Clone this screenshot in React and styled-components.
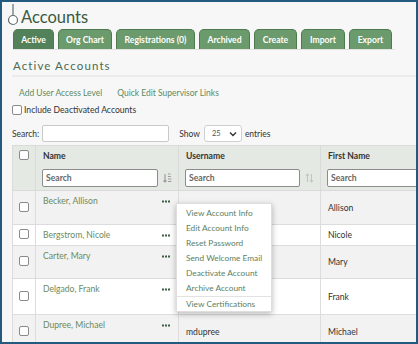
import React from "react"
import styled, { createGlobalStyle } from "styled-components"

const Global = createGlobalStyle`
  html, body { margin: 0; padding: 0; background: #ffffff; }
  * { box-sizing: border-box; }
`

const Frame = styled.div`
  width: 418px;
  height: 344px;
  border: 2px solid #245a7e;
  background: #f7f7f7;
  overflow: hidden;
  font-family: Lato, "Liberation Sans", sans-serif;
  color: #333;
`

const TitleRow = styled.div`
  display: flex;
  align-items: flex-end;
  height: 25px;
  padding-left: 5px;
`

const Title = styled.h1`
  margin: 0 0 0 2px;
  font-size: 16.5px;
  line-height: 19px;
  font-weight: 400;
  color: #3b5a40;
`

const Tabs = styled.div`
  display: flex;
  gap: 4px;
  margin: 2px 0 0 11px;
  width: 382px;
  border-bottom: 1px solid #e2e2e2;
`

const Tab = styled.div`
  width: ${p => p.$w}px;
  height: 20px;
  display: flex;
  align-items: center;
  justify-content: center;
  border: 1px solid #4d7a4f;
  border-bottom: none;
  border-radius: 5px 5px 0 0;
  background: ${p => (p.$active ? "#52815a" : "#6b9a6d")};
  color: #fff;
  font-size: 8.6px;
  font-weight: 700;
  white-space: nowrap;
`

const Panel = styled.div`
  padding: 0 0 0 10px;
`

const PanelTitle = styled.h2`
  margin: 0;
  padding: 9px 0 3px 1px;
  font-size: 11.5px;
  font-weight: 400;
  letter-spacing: 1.1px;
  color: #4b6a50;
  border-bottom: 2px solid #ebebeb;
`

const Links = styled.div`
  display: flex;
  gap: 15px;
  padding: 11px 0 0 7px;
  height: 26px;
`

const Link = styled.span`
  font-size: 8.5px;
  color: #5d8a5f;
`

const CheckRow = styled.label`
  display: flex;
  align-items: center;
  gap: 2px;
  height: 14px;
  font-size: 8.6px;
  color: #333;
`

const Box = styled.span`
  display: inline-block;
  width: 10px;
  height: 10px;
  border: 1px solid #8a8a8a;
  border-radius: 2px;
  background: #fff;
`

const Controls = styled.div`
  display: flex;
  align-items: center;
  height: 17px;
  margin-top: 8px;
  font-size: 8.5px;
  color: #333;
`

const Input = styled.div`
  width: ${p => p.$w}px;
  height: 17px;
  background: #fff;
  border: 1px solid #c9c9c9;
  border-radius: 2px;
  margin-left: ${p => p.$ml || 0}px;
`

const Select = styled.div`
  display: flex;
  align-items: center;
  justify-content: space-between;
  width: 38px;
  height: 17px;
  margin: 0 3px 0 4px;
  padding: 0 4px 0 7px;
  background: #fff;
  border: 1px solid #cfcfcf;
  border-radius: 3px;
  font-size: 7.5px;
  color: #555;
`

const Wrap = styled.div`
  position: relative;
  margin: 3px 0 0 0;
`

const Table = styled.table`
  border-collapse: collapse;
  table-layout: fixed;
  width: 440px;
  font-size: 8.6px;
`

const Th = styled.th`
  width: ${p => p.$w}px;
  height: 20px;
  padding: 0 7px;
  text-align: left;
  font-weight: 700;
  color: #333;
  background: #e4e9e4;
  border: 1px solid #dadada;
  border-bottom: none;
`

const FilterCell = styled.td`
  height: 25px;
  padding: 0 6px;
  background: #e4e9e4;
  border: 1px solid #dadada;
  border-top: none;
`

const FilterBox = styled.div`
  display: flex;
  align-items: center;
  gap: 5px;
`

const FilterInput = styled.div`
  width: ${p => p.$w}px;
  height: 18px;
  display: flex;
  align-items: center;
  padding-left: 3px;
  background: #fff;
  border: 1px solid #8c8c8c;
  border-radius: 2px;
  font-size: 8.6px;
  font-weight: 700;
  color: #666;
`

const Row = styled.tr`
  height: ${p => p.$h}px;
  background: ${p => (p.$odd ? "#f2f2f2" : "#ffffff")};
`

const Td = styled.td`
  padding: 0 7px;
  border: 1px solid #dcdcdc;
  vertical-align: middle;
  color: #333;
  white-space: nowrap;
  overflow: hidden;
`

const CheckTd = styled(Td)`
  text-align: center;
  padding: 0;
`

const NameTd = styled(Td)`
  vertical-align: top;
  padding-top: 5px;
`

const NameLine = styled.div`
  display: flex;
  justify-content: space-between;
  align-items: center;
  color: #6b8a5c;
`

const Menu = styled.div`
  position: absolute;
  left: 164px;
  top: 58px;
  width: 96px;
  padding-top: 2px;
  background: #fff;
  border: 1px solid #dedede;
  box-shadow: 0 2px 6px rgba(0, 0, 0, 0.28);
`

const MenuItem = styled.div`
  height: 15px;
  line-height: 15px;
  padding-left: 9px;
  font-size: 8.3px;
  color: #5d7f5f;
  white-space: nowrap;
  border-top: ${p => (p.$sep ? "1px solid #e2e2e2" : "none")};
`

const Dots = () => (
  <svg width="8" height="3" viewBox="0 0 8 3" style={{ marginRight: 1 }}>
    <rect x="0" y="0.5" width="2" height="2" fill="#3f5e44" />
    <rect x="3" y="0.5" width="2" height="2" fill="#3f5e44" />
    <rect x="6" y="0.5" width="2" height="2" fill="#3f5e44" />
  </svg>
)

const SortIcon = ({ color = "#9a9a9a" }) => (
  <svg width="9" height="10" viewBox="0 0 9 10">
    <path d="M2 1v8M0.5 7.5L2 9l1.5-1.5" stroke={color} strokeWidth="1.2" fill="none" />
    <path d="M5 1h2.5M5 3.5h3M5 6h3.5M5 8.5h3.5" stroke={color} strokeWidth="1" />
  </svg>
)

const SortBoth = () => (
  <svg width="9" height="10" viewBox="0 0 9 10">
    <path d="M2.5 1v8M1 2.5L2.5 1 4 2.5M6.5 1v8M5 7.5L6.5 9 8 7.5" stroke="#c4c4c4" strokeWidth="1.1" fill="none" />
  </svg>
)

const tabs = [
  { label: "Active", w: 41, active: true },
  { label: "Org Chart", w: 54 },
  { label: "Registrations (0)", w: 79 },
  { label: "Archived", w: 51 },
  { label: "Create", w: 43 },
  { label: "Import", w: 44 },
  { label: "Export", w: 43 },
]

const rows = [
  { name: "Becker, Allison", user: "", first: "Allison", h: 34 },
  { name: "Bergstrom, Nicole", user: "", first: "Nicole", h: 21 },
  { name: "Carter, Mary", user: "", first: "Mary", h: 33 },
  { name: "Delgado, Frank", user: "", first: "Frank", h: 36 },
  { name: "Dupree, Michael", user: "mdupree", first: "Michael", h: 34 },
]

const menu = [
  "View Account Info",
  "Edit Account Info",
  "Reset Password",
  "Send Welcome Email",
  "Deactivate Account",
  "Archive Account",
]

export default function App() {
  return (
    <Frame>
      <Global />
      <TitleRow>
        <svg width="12" height="23" viewBox="0 0 12 23">
          <path d="M6 0v11" stroke="#5f6e72" strokeWidth="1.2" />
          <circle cx="6" cy="16" r="4.5" stroke="#5f6e72" strokeWidth="1.2" fill="#fff" />
        </svg>
        <Title>Accounts</Title>
      </TitleRow>
      <Tabs>
        {tabs.map(t => (
          <Tab key={t.label} $w={t.w} $active={t.active}>
            {t.label}
          </Tab>
        ))}
      </Tabs>
      <Panel>
        <PanelTitle>Active Accounts</PanelTitle>
        <Links>
          <Link>Add User Access Level</Link>
          <Link>Quick Edit Supervisor Links</Link>
        </Links>
        <CheckRow>
          <Box /> Include Deactivated Accounts
        </CheckRow>
        <Controls>
          Search:
          <Input $w={127} $ml={3} />
          <span style={{ marginLeft: 10 }}>Show</span>
          <Select>
            25
            <svg width="8" height="6" viewBox="0 0 8 6">
              <path d="M1 1.5l3 3 3-3" stroke="#333" strokeWidth="1.4" fill="none" />
            </svg>
          </Select>
          entries
        </Controls>
        <Wrap>
          <Table>
            <thead>
              <tr>
                <Th $w={23} style={{ padding: 0, textAlign: "center" }}>
                  <Box />
                </Th>
                <Th $w={143}>Name</Th>
                <Th $w={142}>Username</Th>
                <Th $w={132}>First Name</Th>
              </tr>
              <tr>
                <FilterCell />
                <FilterCell>
                  <FilterBox>
                    <FilterInput $w={117}>Search</FilterInput>
                    <SortIcon />
                  </FilterBox>
                </FilterCell>
                <FilterCell>
                  <FilterBox>
                    <FilterInput $w={116}>Search</FilterInput>
                    <SortBoth />
                  </FilterBox>
                </FilterCell>
                <FilterCell>
                  <FilterBox>
                    <FilterInput $w={120}>Search</FilterInput>
                  </FilterBox>
                </FilterCell>
              </tr>
            </thead>
            <tbody>
              {rows.map((r, i) => (
                <Row key={r.name} $h={r.h} $odd={i % 2 === 0}>
                  <CheckTd>
                    <Box />
                  </CheckTd>
                  <NameTd>
                    <NameLine>
                      {r.name}
                      <Dots />
                    </NameLine>
                  </NameTd>
                  <Td>{r.user}</Td>
                  <Td>{r.first}</Td>
                </Row>
              ))}
            </tbody>
          </Table>
          <Menu>
            {menu.map(m => (
              <MenuItem key={m}>{m}</MenuItem>
            ))}
            <MenuItem $sep>View Certifications</MenuItem>
          </Menu>
        </Wrap>
      </Panel>
    </Frame>
  )
}
